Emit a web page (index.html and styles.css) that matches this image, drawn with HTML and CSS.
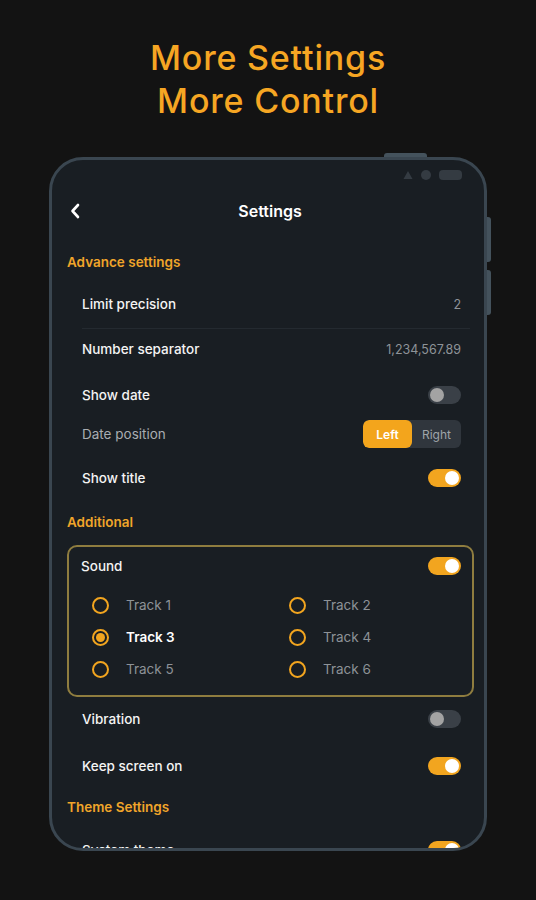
FILE: index.html
```html
<!DOCTYPE html>
<html>
<head>
<meta charset="utf-8">
<link rel="stylesheet" href="styles.css">
</head>
<body>
<h1 class="headline">More Settings<br>More Control</h1>
<div class="device">
  <span class="btn-top"></span>
  <span class="btn-side btn-side-1"></span>
  <span class="btn-side btn-side-2"></span>
  <div class="screen">
    <div class="statusbar">
      <svg class="st-tri" width="10" height="10" viewBox="0 0 10 10"><path d="M5 1 L9.5 9 L0.5 9 Z" fill="#343b42"/></svg>
      <span class="st-dot"></span>
      <span class="st-bat"></span>
    </div>
    <div class="appbar">
      <svg class="back" width="10" height="16" viewBox="0 0 10 16"><path d="M8 2 L2.5 8 L8 14" fill="none" stroke="#ffffff" stroke-width="2.6" stroke-linecap="round" stroke-linejoin="round"/></svg>
      <div class="appbar-title">Settings</div>
    </div>

    <div class="section">Advance settings</div>
    <div class="row h48"><span class="label">Limit precision</span><span class="value">2</span></div>
    <div class="divider"></div>
    <div class="row h40"><span class="label">Number separator</span><span class="value">1,234,567.89</span></div>
    <div class="row h51"><span class="label">Show date</span><span class="toggle"><span class="knob"></span></span></div>
    <div class="row h28"><span class="label dim">Date position</span>
      <span class="segment"><span class="seg seg-on">Left</span><span class="seg">Right</span></span>
    </div>
    <div class="row h60"><span class="label">Show title</span><span class="toggle on"><span class="knob"></span></span></div>

    <div class="section section-b">Additional</div>
    <div class="card">
      <div class="card-head"><span class="label">Sound</span><span class="toggle on"><span class="knob"></span></span></div>
      <div class="tracks">
        <div class="track"><span class="radio"></span><span class="track-label">Track 1</span></div>
        <div class="track"><span class="radio"></span><span class="track-label">Track 2</span></div>
        <div class="track"><span class="radio checked"></span><span class="track-label active">Track 3</span></div>
        <div class="track"><span class="radio"></span><span class="track-label">Track 4</span></div>
        <div class="track"><span class="radio"></span><span class="track-label">Track 5</span></div>
        <div class="track"><span class="radio"></span><span class="track-label">Track 6</span></div>
      </div>
    </div>
    <div class="row h44"><span class="label">Vibration</span><span class="toggle"><span class="knob"></span></span></div>
    <div class="row h50"><span class="label">Keep screen on</span><span class="toggle on"><span class="knob"></span></span></div>
    <div class="section section-c">Theme Settings</div>
    <div class="row h54"><span class="label">System theme</span><span class="toggle on"><span class="knob"></span></span></div>
  </div>
</div>
</body>
</html>
```
FILE: styles.css
```css
* { box-sizing: border-box; }
html, body { margin: 0; padding: 0; }
body {
  width: 536px;
  height: 900px;
  background: #131313;
  font-family: Inter, "Open Sans", sans-serif;
  color: #f2f2f2;
  overflow: hidden;
}
.headline {
  margin: 0;
  padding-top: 36px;
  text-align: center;
  font-size: 34px;
  line-height: 43px;
  font-weight: 500;
  color: #f6a623;
  letter-spacing: 0.8px;
}
.device {
  position: relative;
  margin: 35px 0 0 49px;
  width: 438px;
  height: 694px;
}
.btn-top {
  position: absolute;
  left: 335px;
  top: -4px;
  width: 43px;
  height: 6px;
  border-radius: 3px 3px 0 0;
  background: #44525c;
}
.btn-side {
  position: absolute;
  right: -4px;
  width: 6px;
  border-radius: 0 3px 3px 0;
  background: #44525c;
}
.btn-side-1 { top: 60px; height: 45px; }
.btn-side-2 { top: 113px; height: 45px; }
.screen {
  position: relative;
  width: 100%;
  height: 100%;
  border: 3px solid #3a4650;
  border-radius: 34px;
  background: #191e23;
  overflow: hidden;
}
.statusbar {
  height: 30px;
  display: flex;
  align-items: center;
  justify-content: flex-end;
  gap: 8px;
  padding: 0 22px 0 0;
}
.st-dot {
  width: 10px; height: 10px; border-radius: 50%;
  background: #343b42;
}
.st-bat {
  width: 23px; height: 10px; border-radius: 4px;
  background: #343b42;
}
.appbar {
  height: 42px;
  display: flex;
  align-items: center;
  justify-content: center;
  position: relative;
}
.back {
  position: absolute;
  left: 18px;
  top: 13px;
}
.appbar-title {
  font-size: 16px;
  font-weight: 600;
  color: #ffffff;
  padding-left: 4px;
}
.section {
  margin-top: 12px;
  height: 36px;
  display: flex;
  align-items: center;
  padding-left: 15px;
  font-size: 13.5px;
  font-weight: 600;
  color: #f0a52a;
}
.section-b { margin-top: 0; height: 28px; }
.section-c { margin-top: 0; height: 32px; }
.row {
  display: flex;
  align-items: center;
  justify-content: space-between;
  padding: 0 23px 0 30px;
}
.h28 { height: 28px; }
.h40 { height: 40px; }
.h44 { height: 44px; }
.h48 { height: 48px; }
.h50 { height: 50px; }
.h51 { height: 51px; }
.h54 { height: 54px; }
.h60 { height: 60px; }
.label {
  font-size: 13.5px;
  font-weight: 500;
  color: #f4f4f4;
}
.label.dim { color: #a9adb1; font-weight: 400; }
.value {
  font-size: 12.5px;
  color: #8e9398;
}
.divider {
  height: 1px;
  margin: 0 14px 0 30px;
  background: #242a30;
}
.toggle {
  width: 33px;
  height: 18px;
  border-radius: 9px;
  background: #3a4047;
  display: flex;
  align-items: center;
  padding: 0 2px;
}
.toggle .knob {
  width: 14px; height: 14px; border-radius: 50%;
  background: #a3a3a3;
}
.toggle.on { background: #f2a51f; justify-content: flex-end; }
.toggle.on .knob { background: #ffffff; }
.segment {
  display: flex;
  width: 98px;
  height: 28px;
  border-radius: 6px;
  background: #30363d;
  overflow: hidden;
}
.seg {
  flex: 1;
  display: flex;
  align-items: center;
  justify-content: center;
  font-size: 12px;
  color: #9fa4a9;
}
.seg-on {
  background: #f3a51c;
  color: #ffffff;
  font-weight: 600;
  border-radius: 6px;
}
.card {
  margin: 9px 10px 0 15px;
  height: 152px;
  border: 2px solid #8f7d3f;
  border-radius: 10px;
  padding: 0 11px 0 12px;
}
.card-head {
  height: 38px;
  display: flex;
  align-items: center;
  justify-content: space-between;
}
.tracks {
  margin-top: 4px;
  display: grid;
  grid-template-columns: 197px 1fr;
  grid-auto-rows: 32px;
  padding-left: 11px;
}
.track {
  display: flex;
  align-items: center;
}
.radio {
  width: 17px; height: 17px;
  border-radius: 50%;
  border: 2px solid #f2a51f;
  display: flex;
  align-items: center;
  justify-content: center;
  margin-right: 17px;
}
.radio.checked::after {
  content: "";
  width: 9px; height: 9px; border-radius: 50%;
  background: #f2a51f;
}
.track-label {
  font-size: 13.5px;
  color: #8d9297;
}
.track-label.active { color: #ffffff; font-weight: 600; }
```
